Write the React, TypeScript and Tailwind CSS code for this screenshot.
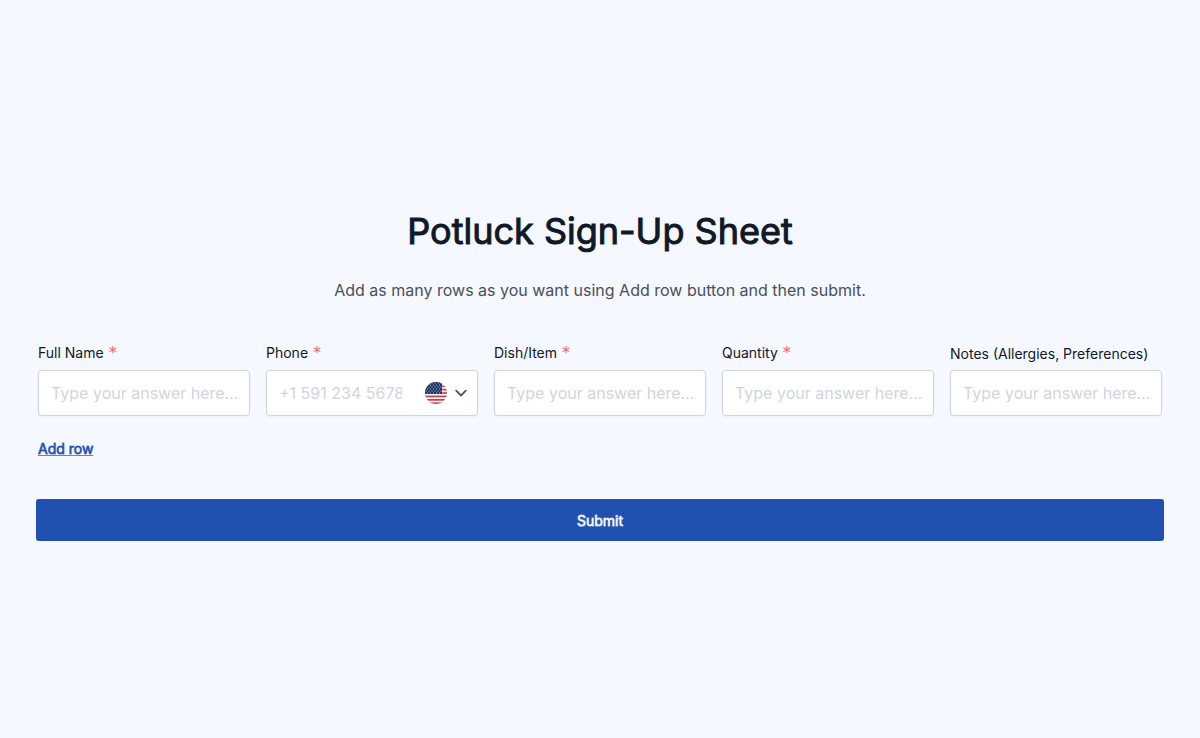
import { useState } from "react";
import type { FormEvent } from "react";

interface Field {
  id: string;
  label: string;
  required?: boolean;
  type: "text" | "phone";
  placeholder: string;
}

const FIELDS: Field[] = [
  { id: "name", label: "Full Name", required: true, type: "text", placeholder: "Type your answer here..." },
  { id: "phone", label: "Phone", required: true, type: "phone", placeholder: "+1 591 234 5678" },
  { id: "dish", label: "Dish/Item", required: true, type: "text", placeholder: "Type your answer here..." },
  { id: "quantity", label: "Quantity", required: true, type: "text", placeholder: "Type your answer here..." },
  { id: "notes", label: "Notes (Allergies, Preferences)", type: "text", placeholder: "Type your answer here..." },
];

// Star centers inside the canton
const STARS = [1, 3, 5, 7, 9, 11].flatMap((y, row) =>
  [1, 4, 7, 10, 13, 16].map((x) => ({ x: x + (row % 2 ? 1.5 : 0), y }))
);

function UsFlag() {
  return (
    <svg viewBox="0 0 22 22" className="h-[22px] w-[22px] shrink-0" aria-hidden="true">
      <clipPath id="flag-circle">
        <circle cx="11" cy="11" r="11" />
      </clipPath>
      <g clipPath="url(#flag-circle)">
        <rect width="22" height="22" fill="#f5f5f7" />
        {[0, 3.4, 6.8, 10.2, 13.6, 17, 20.4].map((y) => (
          <rect key={y} y={y} width="22" height="1.7" fill="#c8404c" />
        ))}
        <rect width="17" height="12" fill="#1f3467" />
        {STARS.map((s) => (
          <circle key={`${s.x}-${s.y}`} cx={s.x} cy={s.y} r="0.6" fill="#d5dbe8" />
        ))}
      </g>
    </svg>
  );
}

function FieldInput({ field, id }: { field: Field; id: string }) {
  const box =
    "flex h-[46px] w-full items-center rounded border border-[#cfd4df] bg-white text-base text-gray-900 shadow-xs placeholder:text-[#d1d5db]";

  if (field.type === "phone") {
    return (
      <div className={`${box} pr-2`}>
        <div className="min-w-0 flex-1 pl-3">
          <input
            id={id}
            type="tel"
            required={field.required}
            placeholder={field.placeholder}
            className="block w-full bg-transparent outline-none placeholder:text-[#d1d5db]"
          />
        </div>
        <button type="button" aria-label="Select country" className="ml-[23px] flex shrink-0 items-center gap-[6px]">
          <UsFlag />
          <svg viewBox="0 0 16 16" className="h-4 w-4" fill="none" stroke="#4b5563" strokeWidth="1.8" aria-hidden="true">
            <path d="M3.2 5.7l4.8 4.8 4.8-4.8" strokeLinecap="round" strokeLinejoin="round" />
          </svg>
        </button>
      </div>
    );
  }

  return (
    <input id={id} type="text" required={field.required} placeholder={field.placeholder} className={`${box} px-3`} />
  );
}

export default function App() {
  const [rows, setRows] = useState([0]);

  const handleSubmit = (e: FormEvent) => {
    e.preventDefault();
  };

  return (
    <main className="flex min-h-screen flex-col justify-center bg-[#f5f8ff] px-9 font-[Inter,sans-serif]">
      <form onSubmit={handleSubmit} className="pt-[13px]">
        <h1 className="text-center text-4xl text-[#111827] [-webkit-text-stroke:1px]">Potluck Sign-Up Sheet</h1>
        <p className="mt-[27px] text-center text-base text-[#4b4f58]">
          Add as many rows as you want using Add row button and then submit.
        </p>

        <div className="mt-10 flex flex-col gap-4 px-0.5">
          {rows.map((row) => (
            <div key={row} className="grid grid-cols-5 items-end gap-4">
              {FIELDS.map((field) => (
                <div key={field.id}>
                  <label htmlFor={`${field.id}-${row}`} className="mb-1.5 block text-sm whitespace-nowrap text-[#111827]">
                    {field.label}
                    {field.required && (
                      <span className="ml-[5px] font-['DejaVu_Sans',sans-serif] text-base leading-[22px] text-[#f76363]">
                        *
                      </span>
                    )}
                  </label>
                  <FieldInput field={field} id={`${field.id}-${row}`} />
                </div>
              ))}
            </div>
          ))}
        </div>

        <button
          type="button"
          onClick={() => setRows([...rows, rows.length])}
          className="mt-[23px] ml-0.5 block text-sm text-[#2151b0] underline [-webkit-text-stroke:1px_#2151b0b0]"
        >
          Add row
        </button>

        <button
          type="submit"
          className="mt-10 block h-[42px] w-full rounded-[3px] bg-[#2151b0] pt-0.5 text-sm text-white [-webkit-text-stroke:1px_#ffffffa0]"
        >
          Submit
        </button>
      </form>
    </main>
  );
}
